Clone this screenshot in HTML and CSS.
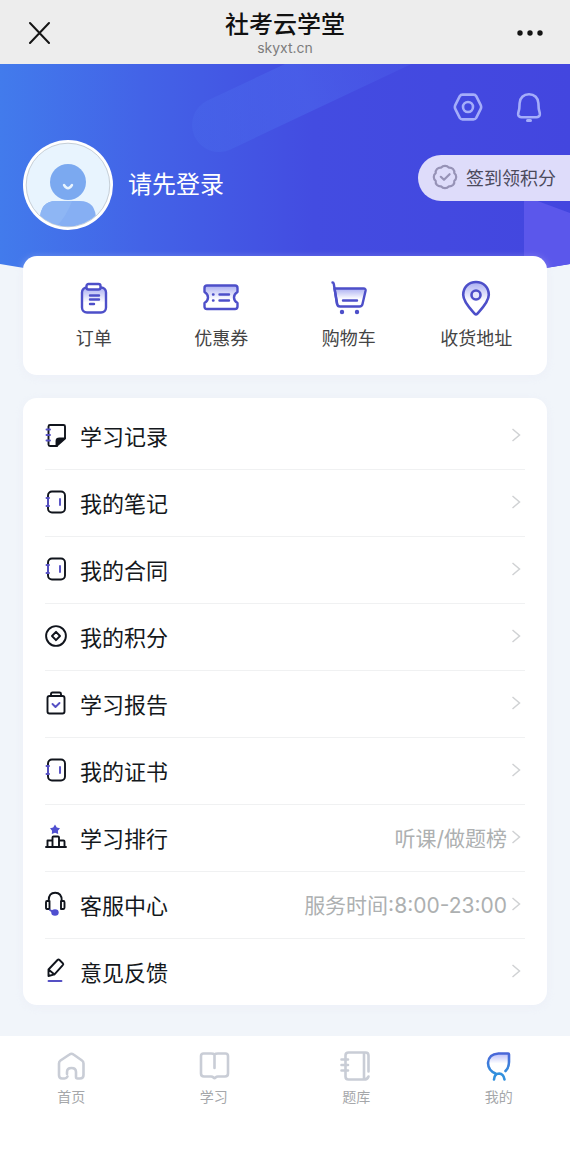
FILE: index.html
```html
<!DOCTYPE html>
<html lang="zh-CN">
<head>
<meta charset="utf-8">
<meta name="viewport" content="width=device-width, initial-scale=1">
<title>社考云学堂</title>
<link rel="stylesheet" href="styles.css">
</head>
<body>
<header class="topbar">
  <button class="icon-button" type="button" aria-label="关闭">
    <svg width="28" height="24" viewBox="0 0 28 24" fill="none" stroke="#151515" stroke-width="2" stroke-linecap="round"><path d="M4 3l19 20M23 3L4 23"/></svg>
  </button>
  <div class="topbar-title">
    <h1>社考云学堂</h1>
    <p>skyxt.cn</p>
  </div>
  <button class="icon-button" type="button" aria-label="更多">
    <svg width="28" height="24" viewBox="0 0 28 24" fill="#151515"><circle cx="4" cy="13" r="2.7"/><circle cx="14" cy="13" r="2.7"/><circle cx="24" cy="13" r="2.7"/></svg>
  </button>
</header>

<main class="page">
  <svg class="hero-art" viewBox="0 0 570 226" preserveAspectRatio="none" aria-hidden="true">
    <defs>
      <linearGradient id="sky" x1="0" y1="0" x2="1" y2="0">
        <stop offset="0" stop-color="#427bec"/>
        <stop offset="0.25" stop-color="#4363e7"/>
        <stop offset="0.55" stop-color="#434ce1"/>
        <stop offset="1" stop-color="#4346df"/>
      </linearGradient>
      <linearGradient id="band" gradientUnits="userSpaceOnUse" x1="190" y1="90" x2="430" y2="0">
        <stop offset="0" stop-color="#4a6cec" stop-opacity="0.3"/>
        <stop offset="0.5" stop-color="#4a62ea" stop-opacity="0.7"/>
        <stop offset="1" stop-color="#4a55e6" stop-opacity="0.5"/>
      </linearGradient>
      <clipPath id="bowl"><path d="M0 0H570V200Q285 250 0 200Z"/></clipPath>
    </defs>
    <g clip-path="url(#bowl)">
      <path d="M0 0H570V226H0Z" fill="url(#sky)"/>
      <path d="M219 61L416 -32" stroke="url(#band)" stroke-width="54" stroke-linecap="round"/>
      <path d="M524 132L570 149V226H524Z" fill="#5b57eb"/>
    </g>
  </svg>

  <div class="hero-actions">
    <button class="icon-button" type="button" aria-label="设置">
      <svg width="30" height="30" viewBox="0 0 30 30" fill="none" stroke="#a5adfa" stroke-width="2.6" stroke-linejoin="round"><path d="M9.5 2.6H20.5Q22.3 2.6 23.2 4.1L27.6 12.8Q28.7 15 27.6 17.2L23.2 25.9Q22.3 27.4 20.5 27.4H9.5Q7.7 27.4 6.8 25.9L2.4 17.2Q1.3 15 2.4 12.8L6.8 4.1Q7.7 2.6 9.5 2.6Z"/><circle cx="15" cy="15" r="5"/></svg>
    </button>
    <button class="icon-button" type="button" aria-label="消息">
      <svg width="30" height="30" viewBox="0 0 30 30" fill="none" stroke="#a5adfa" stroke-width="2.6" stroke-linecap="round" stroke-linejoin="round"><path d="M15 2.2C9.5 2.2 5.8 6 5.6 11.2L5.3 16.5C5 19 3.8 20.5 4.2 22.8Q4.7 25.2 7.5 25.2H22.5Q25.3 25.2 25.8 22.8C26.2 20.5 25 19 24.7 16.500L24.4 11.2C24.2 6 20.5 2.2 15 2.2Z"/><path d="M13.500 28.500H16.500" stroke-width="3"/></svg>
    </button>
  </div>

  <section class="profile">
    <svg class="avatar" width="90" height="90" viewBox="0 0 90 90" aria-hidden="true">
      <clipPath id="face"><circle cx="45" cy="45" r="41.5"/></clipPath>
      <circle cx="45" cy="45" r="45" fill="#fff"/>
      <circle cx="45" cy="45" r="41.8" fill="#e8f4fe" stroke="#b9c3cc" stroke-width="0.8"/>
      <g clip-path="url(#face)">
        <path d="M17 90V80Q17 61 33 61H57Q73 61 73 80V90Z" fill="#86aff3"/>
        <path d="M17 90V80Q17 61 33 61H49Q43 78 30 90Z" fill="#8eb6f4"/>
      </g>
      <circle cx="45" cy="42" r="18" fill="#7ba9f0"/>
      <path d="M41 45Q45 51.500 49 45" fill="none" stroke="#e8f4fe" stroke-width="2.4" stroke-linecap="round"/>
    </svg>
    <a class="login" href="#login">请先登录</a>
    <button class="checkin" type="button">
      <svg width="26" height="26" viewBox="0 0 26 26" fill="none" stroke="#9692b6" stroke-width="2.2" stroke-linejoin="round" stroke-linecap="round"><path d="M13 1.8Q15.500 1.8 16.8 3.700Q19.2 3.400 21 5Q22.700 6.700 22.300 9.200Q24.200 10.500 24.200 13Q24.200 15.500 22.300 16.800Q22.700 19.300 21 21Q19.200 22.600 16.800 22.300Q15.500 24.200 13 24.200Q10.500 24.200 9.200 22.300Q6.800 22.600 5 21Q3.300 19.300 3.700 16.800Q1.800 15.500 1.800 13Q1.800 10.500 3.700 9.200Q3.300 6.700 5 5Q6.800 3.400 9.200 3.700Q10.500 1.800 13 1.800Z"/><path d="M8.800 12.800L12 15.800L17.600 10.200"/></svg>
      签到领积分
    </button>
  </section>

  <nav class="card shortcuts" aria-label="快捷入口">
    <a href="#orders">
      <svg width="36" height="36" viewBox="0 0 36 36" fill="none" stroke="#4d4fc9" stroke-width="2.4" stroke-linecap="round" stroke-linejoin="round">
        <defs><linearGradient id="tint" x1="0" y1="0" x2="0" y2="1"><stop offset="0" stop-color="#aaaef2"/><stop offset="0.6" stop-color="#fff"/></linearGradient></defs>
        <rect x="6" y="7.500" width="24" height="25" rx="5" fill="url(#tint)"/><rect x="10.500" y="4" width="14" height="5.500" rx="2" fill="#fff"/><path d="M14 15.500H23M14 19.500H23M14 24H18"/></svg>
      <span>订单</span>
    </a>
    <a href="#coupons">
      <svg width="36" height="36" viewBox="0 0 36 36" fill="none" stroke="#4d4fc9" stroke-width="2.4" stroke-linecap="round" stroke-linejoin="round"><path d="M4 5.500H32Q34.500 5.500 34.500 8V12Q31 14 31 17.500T34.500 23V26.500Q34.500 29 32 29H4Q1.500 29 1.500 26.500V23Q5 21 5 17.500T1.500 12V8Q1.500 5.500 4 5.500Z" fill="url(#tint)"/><path d="M10 14.500H10.500M10 20.500H10.500M16.500 14.500H26M16.500 20.500H26"/></svg>
      <span>优惠券</span>
    </a>
    <a href="#cart">
      <svg width="36" height="36" viewBox="0 0 36 36" fill="none" stroke="#4d4fc9" stroke-width="2.4" stroke-linecap="round" stroke-linejoin="round"><path d="M3.500 8.500H32.500Q35 8.500 34.500 11L31.500 24Q31 26.500 28.500 26.500H9Q6.500 26.500 6.200 24Z" fill="url(#tint)"/><path d="M1.500 2.500Q2.500 2.500 2.800 4L6 24M12 20.500H26"/><circle cx="11" cy="32" r="1" fill="#4d4fc9"/><circle cx="26" cy="32" r="1" fill="#4d4fc9"/></svg>
      <span>购物车</span>
    </a>
    <a href="#address">
      <svg width="36" height="36" viewBox="0 0 36 36" fill="none" stroke="#4d4fc9" stroke-width="2.6" stroke-linecap="round" stroke-linejoin="round"><path d="M18 2C10.500 2 5.200 7.600 5.200 14.800C5.200 22 12.500 29 16.800 33.800Q18 35 19.200 33.800C23.500 29 30.800 22 30.800 14.800C30.800 7.600 25.500 2 18 2Z" fill="url(#tint)"/><circle cx="18" cy="15" r="4.500" fill="#e5e7fd"/></svg>
      <span>收货地址</span>
    </a>
  </nav>

  <ul class="card menu">
    <li><a href="#records">
      <svg class="menu-icon" viewBox="0 0 22 24"><path d="M20 15V3.500Q20 2 18.500 2H5Q3.500 2 3.500 3.500V21.500Q3.500 23 5 23H12"/><path d="M11.500 23V18Q11.500 15.500 14.500 15.500H20Z" fill="#10141c"/><path class="accent" d="M1.500 6.500H5M1.500 12H5M1.500 17.500H5"/></svg>
      <span>学习记录</span><svg class="chevron" viewBox="0 0 18 18"><path d="M5.500 3l7 6L5.500 15"/></svg></a></li>
    <li><a href="#notes">
      <svg class="menu-icon" viewBox="0 0 22 24"><rect x="3" y="1.500" width="17" height="21" rx="4"/><path class="accent" d="M3 8v8M1.500 8H4M1.500 16H4M15 9V15"/></svg>
      <span>我的笔记</span><svg class="chevron" viewBox="0 0 18 18"><path d="M5.500 3l7 6L5.500 15"/></svg></a></li>
    <li><a href="#contracts">
      <svg class="menu-icon" viewBox="0 0 22 24"><rect x="3" y="1.500" width="17" height="21" rx="4"/><path class="accent" d="M3 8v8M1.500 8H4M1.500 16H4M15 9V15"/></svg>
      <span>我的合同</span><svg class="chevron" viewBox="0 0 18 18"><path d="M5.500 3l7 6L5.500 15"/></svg></a></li>
    <li><a href="#points">
      <svg class="menu-icon" viewBox="0 0 22 24"><circle cx="11" cy="12" r="9.900"/><path d="M11 7.800L15 12L11 16.200L7 12Z"/></svg>
      <span>我的积分</span><svg class="chevron" viewBox="0 0 18 18"><path d="M5.500 3l7 6L5.500 15"/></svg></a></li>
    <li><a href="#report">
      <svg class="menu-icon" viewBox="0 0 22 24"><rect x="2.500" y="5" width="17" height="17.500" rx="2"/><path d="M6 5V3Q6 1.500 7.500 1.500H14.500Q16 1.500 16 3V5"/><path class="accent" d="M7.500 13L10.500 16L14.500 12"/></svg>
      <span>学习报告</span><svg class="chevron" viewBox="0 0 18 18"><path d="M5.500 3l7 6L5.500 15"/></svg></a></li>
    <li><a href="#certificates">
      <svg class="menu-icon" viewBox="0 0 22 24"><rect x="3" y="1.500" width="17" height="21" rx="4"/><path class="accent" d="M3 8v8M1.500 8H4M1.500 16H4M15 9V15"/></svg>
      <span>我的证书</span><svg class="chevron" viewBox="0 0 18 18"><path d="M5.500 3l7 6L5.500 15"/></svg></a></li>
    <li><a href="#ranking">
      <svg class="menu-icon" viewBox="0 0 22 24"><path d="M1 22H21M2.500 22V15.500H7.500M7.500 22V12.500Q7.500 11.500 8.500 11.500H13Q14 11.500 14 12.500V22M14 15.500H18.500Q19.500 15.500 19.500 16.500V22"/><path class="accent-fill" d="M10 -0.500L11.800 2.400L15 3.200L12.900 5.800L13.200 9L10 7.800L6.800 9L7.100 5.800L5 3.200L8.200 2.400Z"/></svg>
      <span>学习排行</span><small>听课/做题榜</small><svg class="chevron" viewBox="0 0 18 18"><path d="M5.500 3l7 6L5.500 15"/></svg></a></li>
    <li><a href="#service">
      <svg class="menu-icon" viewBox="0 0 22 24"><path d="M3.700 9V8.500Q3.700 0.800 10.200 0.800T16.700 8.500V9M4.500 9V17H2Q1 17 1 15.500V10.500Q1 9 2 9ZM16 9H18.500Q19.500 9 19.500 10.500V15.500Q19.500 17 18.500 17H16Z"/><path class="accent" d="M5 18L8 20"/><ellipse class="accent-fill" cx="10" cy="20.500" rx="3.700" ry="3.200"/></svg>
      <span>客服中心</span><small>服务时间:8:00-23:00</small><svg class="chevron" viewBox="0 0 18 18"><path d="M5.500 3l7 6L5.500 15"/></svg></a></li>
    <li><a href="#feedback">
      <svg class="menu-icon" viewBox="0 0 22 24"><path d="M3.500 17V10.500L12.500 1Q13.500 0 14.500 1L17.800 4.200Q18.800 5.200 17.800 6.200L9.500 15.300ZM3.800 10.800L9.500 15.500"/><path class="accent" d="M3.500 22H16.500"/></svg>
      <span>意见反馈</span><svg class="chevron" viewBox="0 0 18 18"><path d="M5.500 3l7 6L5.500 15"/></svg></a></li>
  </ul>
</main>

<nav class="tabbar" aria-label="主导航">
  <a href="#home">
    <svg width="32" height="32" viewBox="0 0 32 32"><path d="M12 24V22Q12 18 16.500 18Q21 18 21 22V27Q21 28.500 22.500 28.500H25Q28.500 28.500 28.500 25V13.500Q28.500 11.500 27 10.500L18.500 4.500Q16.500 3 14.500 4.500L5.500 10.500Q4 11.500 4 13.500V25Q4 28.500 7 28.500H9.500Q11.500 28.500 12.500 26.500"/></svg>
    <span>首页</span>
  </a>
  <a href="#study">
    <svg width="32" height="32" viewBox="0 0 32 32"><path d="M16.500 18V4.500Q15.500 3.500 13 3.500H5.500Q3 3.500 3 6V23.500Q3 26.500 6 26.500H13Q14.500 26.500 15.500 27.500Q16.500 28.500 17.500 27.500Q18.500 26.500 20 26.500H27Q30 26.500 30 23.500V6Q30 3.500 27.500 3.500H20Q17.500 3.500 16.500 4.500"/></svg>
    <span>学习</span>
  </a>
  <a href="#questions">
    <svg width="32" height="32" viewBox="0 0 32 32"><path d="M24 2.500H8.500Q5.500 2.500 5.500 5.500V26.500Q5.500 29.500 8.500 29.500H24ZM24 2.500H25.500Q28.500 2.500 28.500 5.500V21.500M24 29.500Q27.500 29.500 28.500 26.500M1.500 9.500H8M1.500 15H8M1.500 20.500H8"/></svg>
    <span>题库</span>
  </a>
  <a href="#mine" aria-current="page">
    <svg width="32" height="32" viewBox="0 0 32 32"><defs><linearGradient id="leaf" x1="0" y1="0" x2="0" y2="1"><stop offset="0" stop-color="#b9bdf8"/><stop offset="0.5" stop-color="#fff"/></linearGradient><linearGradient id="stem" x1="0" y1="0" x2="0" y2="1"><stop offset="0" stop-color="#4a67d8"/><stop offset="1" stop-color="#3290dd"/></linearGradient></defs><path d="M22.500 21Q26 17.500 26 12V4.500Q26 3.500 25 3.500H15.500Q5.500 4 5 13Q5.200 20.500 12.500 23.500" fill="url(#leaf)" stroke="url(#stem)"/><path d="M11 29.500Q11.500 23.500 16.200 23.500Q20.500 23.800 21.500 29.500" stroke="#3290dd"/></svg>
    <span>我的</span>
  </a>
</nav>
</body>
</html>
```

FILE: styles.css
```css
* {
  box-sizing: border-box;
}

body {
  margin: 0;
  min-height: 100vh;
  display: flex;
  flex-direction: column;
  background: #f1f5fa;
  color: #14181c;
  font-family: Inter, "Noto Sans CJK SC", sans-serif;
}

a {
  color: inherit;
  text-decoration: none;
}

svg {
  display: block;
  flex: none;
}

.icon-button {
  padding: 0;
  border: 0;
  background: none;
  cursor: pointer;
}

.topbar {
  display: flex;
  align-items: center;
  justify-content: space-between;
  height: 64px;
  padding: 0 26px;
  background: #ededed;
}

.topbar-title {
  text-align: center;
}

.topbar h1 {
  margin: 0;
  font-size: 24px;
  line-height: 32px;
  font-weight: 500;
  color: #111;
}

.topbar p {
  margin: 0;
  font-size: 14px;
  line-height: 14px;
  color: #7c7c7c;
}

.page {
  position: relative;
  flex: none;
  padding: 28px 23px 31px;
}

.hero-art {
  position: absolute;
  top: 0;
  left: 0;
  z-index: -1;
  width: 100%;
  height: 226px;
}

.hero-actions {
  display: flex;
  justify-content: flex-end;
  gap: 31px;
  padding-right: 3px;
}

.profile {
  display: flex;
  align-items: center;
  margin: 18px -23px 26px 0;
}

.login {
  margin-left: 15px;
  font-size: 24px;
  line-height: 36px;
  color: #fff;
}

.checkin {
  display: flex;
  align-items: center;
  align-self: flex-start;
  gap: 8px;
  height: 46px;
  margin: 15px 0 0 auto;
  padding: 0 14px 2px;
  border: 0;
  border-radius: 23px 0 0 23px;
  background: #dedcfa;
  color: #4b4a5c;
  font: inherit;
  font-size: 18px;
  cursor: pointer;
}

.card {
  border-radius: 14px;
  background: #fff;
  box-shadow: 0 2px 8px #e6e9f566;
}

.shortcuts {
  display: grid;
  grid-template-columns: repeat(4, 1fr);
  padding: 24px 7px 22px;
}

.shortcuts a {
  display: flex;
  flex-direction: column;
  align-items: center;
  gap: 9px;
  font-size: 18px;
  line-height: 28px;
  color: #444;
}

.menu {
  margin: 23px 0 0;
  padding: 4px 22px 0;
  list-style: none;
}

.menu a {
  display: flex;
  align-items: center;
  height: 67px;
  padding-bottom: 2px;
  font-size: 22px;
}

.menu li + li a {
  border-top: 1px solid #f0f1f2;
}

.menu small {
  margin-left: auto;
  font-size: 21px;
  color: #adb0b1;
}

.menu span + .chevron {
  margin-left: auto;
}

.menu-icon {
  width: 22px;
  height: 24px;
  margin-right: 13px;
  overflow: visible;
  fill: none;
  stroke: #10141c;
  stroke-width: 1.9;
  stroke-linecap: round;
  stroke-linejoin: round;
}

.menu-icon .accent {
  stroke: #5550c4;
}

.menu-icon .accent-fill {
  fill: #4f4fd0;
  stroke: none;
}

.chevron {
  width: 18px;
  height: 18px;
  fill: none;
  stroke: #d0d2d4;
  stroke-width: 1.5;
}

.tabbar {
  display: grid;
  grid-template-columns: repeat(4, 1fr);
  flex: 1;
  padding: 14px 0 52px;
  background: #fff;
}

.tabbar a {
  display: flex;
  flex-direction: column;
  align-items: center;
  gap: 5px;
  font-size: 14px;
  line-height: 20px;
  color: #a5a7aa;
}

.tabbar svg {
  fill: none;
  stroke: #c9cdd6;
  stroke-width: 2.6;
  stroke-linecap: round;
  stroke-linejoin: round;
}
```
